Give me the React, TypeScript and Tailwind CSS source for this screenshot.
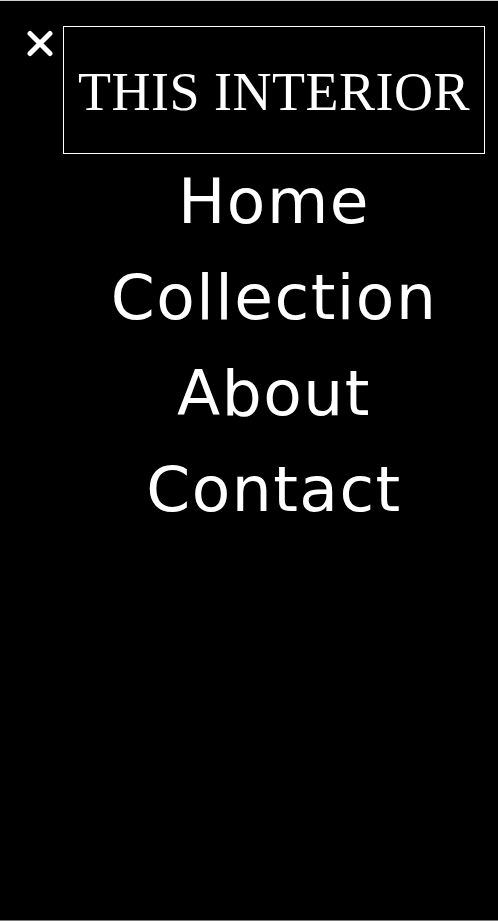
export default function App() {
  const liens = ["Home", "Collection", "About", "Contact"];

  return (
    <div className="min-h-screen h-[921px] bg-black border-t border-t-[#cfcfcf] border-b border-b-[#7a7a7a] flex pt-[25px] pr-[13px]">
      <button className="w-[63px] shrink-0 flex justify-start pl-[27px] pt-[4px] h-fit">
        <svg width="26" height="27" viewBox="0 0 26 27" fill="none">
          <path d="M3 3.5 L23 23.5 M23 3.5 L3 23.5" stroke="white" strokeWidth="5" strokeLinecap="round" />
        </svg>
      </button>

      <div className="flex-1 flex flex-col">
        <div className="h-[128px] border border-white flex items-center justify-center">
          <span
            className="text-white text-[54px] leading-none pt-[4px] tracking-[0.5px]"
            style={{ fontFamily: '"Liberation Serif", serif' }}
          >
            THIS INTERIOR
          </span>
        </div>

        <nav className="flex flex-col items-center">
          {liens.map((l) => (
            <a
              key={l}
              href="#"
              className="text-white text-[63px] leading-[96px] tracking-[1.5px]"
              style={{ fontFamily: '"DejaVu Sans", sans-serif' }}
            >
              {l}
            </a>
          ))}
        </nav>
      </div>
    </div>
  );
}
